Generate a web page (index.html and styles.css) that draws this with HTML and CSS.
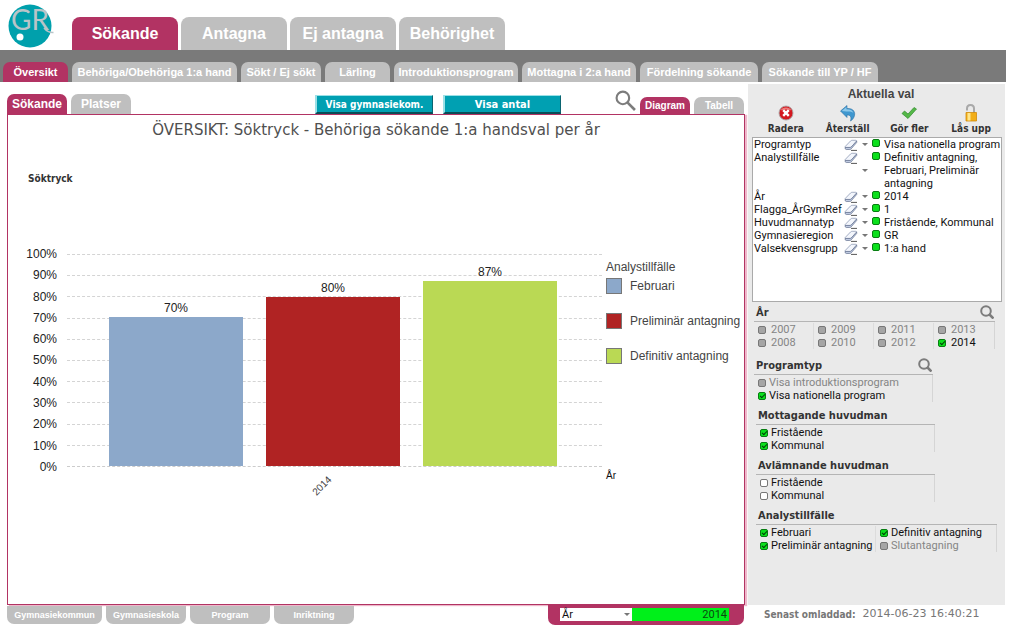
FILE: index.html
```html
<!DOCTYPE html>
<html lang="sv">
<head>
<meta charset="utf-8">
<title>Översikt: Söktryck</title>
<link rel="stylesheet" href="styles.css">
</head>
<body>
<svg class="sprite" aria-hidden="true">
  <symbol id="lens" viewBox="0 0 20 20"><circle cx="7.500" cy="7.500" r="6" fill="none" stroke="currentColor" stroke-width="2"/><path d="M12 12 19 19" stroke="currentColor" stroke-width="2.500"/></symbol>
  <symbol id="lens-bold" viewBox="0 0 14 14"><circle cx="6" cy="6" r="4.800" fill="none" stroke="currentColor" stroke-width="2"/><path d="M9 9 13.500 13.500" stroke="currentColor" stroke-width="2.600"/></symbol>
  <symbol id="eraser" viewBox="0 0 14 12"><path d="M1.200 7.500 6.500 2Q7.200 1.300 8.200 1.300h3.600q1.400 0 .5 1L7.500 7.800Q7 8.400 6 8.400H2Q.5 8.400 1.200 7.500Z" fill="#f3f6fc" stroke="#8f9ab5" stroke-width=".8"/><path d="M1 8.500q0 2 1.200 2h3.600q.8 0 1.300-.6L12.700 3.500V2L7.300 7.900q-.5.6-1.300.6Z" fill="#c0cbe2" stroke="#66728f" stroke-width=".7"/><path d="M7 11.400h6" stroke="#444" stroke-width=".9"/></symbol>
</svg>
<header class="top">
  <svg class="logo" viewBox="0 0 46 44" role="img" aria-label="GR">
    <circle cx="22" cy="22" r="21.500" fill="#00a0ac"/>
    <circle cx="12" cy="33" r="3.500" fill="#fff"/>
    <text class="logo-text" x="3" y="26">GR</text>
    <path d="M36 24q4 5 9.500 4.500" fill="none" stroke="#b9c4c8" stroke-width="1.500"/>
  </svg>
  <nav class="main-tabs">
    <button class="tab active">Sökande</button>
    <button class="tab">Antagna</button>
    <button class="tab">Ej antagna</button>
    <button class="tab">Behörighet</button>
  </nav>
</header>
<nav class="sub-tabs">
  <button class="tab s65 active">Översikt</button>
  <button class="tab s165">Behöriga/Obehöriga 1:a hand</button>
  <button class="tab s80">Sökt / Ej sökt</button>
  <button class="tab s65">Lärling</button>
  <button class="tab s124">Introduktionsprogram</button>
  <button class="tab s114">Mottagna i 2:a hand</button>
  <button class="tab s118">Fördelning sökande</button>
  <button class="tab s116">Sökande till YP / HF</button>
</nav>
<div class="workspace">
  <main class="content">
    <div class="toolbar">
      <div class="view-tabs">
        <button class="tab active">Sökande</button>
        <button class="tab">Platser</button>
      </div>
      <div class="actions">
        <button class="action small">Visa gymnasiekom.</button>
        <button class="action">Visa antal</button>
      </div>
      <div class="mode-tabs">
        <button class="plain" aria-label="Sök"><svg class="lens"><use href="#lens"/></svg></button>
        <button class="tab active">Diagram</button>
        <button class="tab">Tabell</button>
      </div>
    </div>
    <section class="chart">
      <h1 class="chart-title">ÖVERSIKT: Söktryck - Behöriga sökande 1:a handsval per år</h1>
      <p class="measure">Söktryck</p>
      <div class="chart-body">
        <div class="y-axis">
          <span>100%</span><span>90%</span><span>80%</span><span>70%</span><span>60%</span><span>50%</span><span>40%</span><span>30%</span><span>20%</span><span>10%</span><span>0%</span>
        </div>
        <div class="plot">
          <div class="grid-lines"><i></i><i></i><i></i><i></i><i></i><i></i><i></i><i></i><i></i><i></i></div>
          <div class="bars">
            <div class="column"><span>70%</span><div class="bar blue" style="height:70.3%"></div></div>
            <div class="column"><span>80%</span><div class="bar red" style="height:79.8%"></div></div>
            <div class="column"><span>87%</span><div class="bar green" style="height:87.3%"></div></div>
          </div>
        </div>
        <div class="legend">
          <p>Analystillfälle</p>
          <ul>
            <li><i class="blue"></i>Februari</li>
            <li><i class="red"></i>Preliminär antagning</li>
            <li><i class="green"></i>Definitiv antagning</li>
          </ul>
        </div>
        <div class="x-axis"><span>2014</span></div>
        <div class="x-title">År</div>
      </div>
    </section>
  </main>
  <aside class="side">
    <h2 class="side-title">Aktuella val</h2>
    <div class="tools">
      <button class="tool"><svg viewBox="0 0 18 18"><circle cx="9" cy="9" r="7" fill="#d3181f" stroke="#a8a8a8" stroke-width=".9"/><path d="M3.500 6.500a6 5 0 0 1 11 0q-5-2-11 0Z" fill="#ee7a7a"/><path d="m6.200 6.200 5.600 5.600m0-5.600-5.600 5.600" stroke="#fff" stroke-width="2.400"/></svg>Radera</button>
      <button class="tool"><svg viewBox="0 0 18 18"><path d="M1.500 7 8 1.500v3c6.500-.5 9 4 7 8.500-.8 2-2 3-3.500 4 1-3.500.5-6-3.500-6v2.500Z" fill="#3f97cf" stroke="#2a6fa3" stroke-width=".6"/><path d="M2.800 7 7.400 3v2.300c4 0 6 1 7 3.500-2-1.300-4-1.500-7-1.300Z" fill="#8cc8ea"/></svg>Återställ</button>
      <button class="tool"><svg viewBox="0 0 18 18"><path d="m2 9.500 2.500-2.500L8 10l6-6.500L16.500 5 8 14.500Z" fill="#55b848" stroke="#2f8a2c" stroke-width=".7"/></svg>Gör fler</button>
      <button class="tool"><svg viewBox="0 0 18 18"><path d="M5 6.500V4.500q0-3.500 3.500-3.500T12 4.500V9" fill="none" stroke="#a9a9a9" stroke-width="2"/><path d="M4 8.500h10.500v8.500H4Z" fill="#f2ae18" stroke="#d08a0a" stroke-width=".8"/><path d="M5.500 9h3v7.500h-3Z" fill="#ffe68c"/></svg>Lås upp</button>
    </div>
    <div class="selections">
      <table>
        <tr><th>Programtyp</th><td><svg class="eraser"><use href="#eraser"/></svg></td><td><i class="caret"></i></td><td><i class="dot"></i></td><td class="single">Visa nationella program</td></tr>
        <tr><th>Analystillfälle</th><td><svg class="eraser"><use href="#eraser"/></svg></td><td class="mid"><i class="caret"></i></td><td><i class="dot"></i></td><td>Definitiv antagning, Februari, Preliminär antagning</td></tr>
        <tr><th>År</th><td><svg class="eraser"><use href="#eraser"/></svg></td><td><i class="caret"></i></td><td><i class="dot"></i></td><td>2014</td></tr>
        <tr><th>Flagga_ÅrGymRef</th><td><svg class="eraser"><use href="#eraser"/></svg></td><td><i class="caret"></i></td><td><i class="dot"></i></td><td>1</td></tr>
        <tr><th>Huvudmannatyp</th><td><svg class="eraser"><use href="#eraser"/></svg></td><td><i class="caret"></i></td><td><i class="dot"></i></td><td class="single">Fristående, Kommunal</td></tr>
        <tr><th>Gymnasieregion</th><td><svg class="eraser"><use href="#eraser"/></svg></td><td><i class="caret"></i></td><td><i class="dot"></i></td><td>GR</td></tr>
        <tr><th>Valsekvensgrupp</th><td><svg class="eraser"><use href="#eraser"/></svg></td><td><i class="caret"></i></td><td><i class="dot"></i></td><td>1:a hand</td></tr>
      </table>
    </div>
    <section class="filter wide years">
      <h3>År <button class="plain" aria-label="Sök år"><svg class="lens-bold"><use href="#lens-bold"/></svg></button></h3>
      <div class="options four">
        <label><input type="checkbox" disabled>2007</label><label><input type="checkbox" disabled>2008</label>
        <label><input type="checkbox" disabled>2009</label><label><input type="checkbox" disabled>2010</label>
        <label><input type="checkbox" disabled>2011</label><label><input type="checkbox" disabled>2012</label>
        <label><input type="checkbox" disabled>2013</label><label><input type="checkbox" checked>2014</label>
      </div>
    </section>
    <section class="filter">
      <h3>Programtyp <button class="plain" aria-label="Sök programtyp"><svg class="lens-bold"><use href="#lens-bold"/></svg></button></h3>
      <div class="options">
        <label><input type="checkbox" disabled>Visa introduktionsprogram</label>
        <label><input type="checkbox" checked>Visa nationella program</label>
      </div>
    </section>
    <section class="filter inset">
      <h3>Mottagande huvudman</h3>
      <div class="options">
        <label><input type="checkbox" checked>Fristående</label>
        <label><input type="checkbox" checked>Kommunal</label>
      </div>
    </section>
    <section class="filter inset">
      <h3>Avlämnande huvudman</h3>
      <div class="options">
        <label><input type="checkbox">Fristående</label>
        <label><input type="checkbox">Kommunal</label>
      </div>
    </section>
    <section class="filter inset wide">
      <h3>Analystillfälle</h3>
      <div class="options two">
        <label><input type="checkbox" checked>Februari</label><label><input type="checkbox" checked>Preliminär antagning</label>
        <label><input type="checkbox" checked>Definitiv antagning</label><label><input type="checkbox" disabled>Slutantagning</label>
      </div>
    </section>
  </aside>
</div>
<footer class="bottom">
  <div class="bottom-left">
    <nav class="dimension-tabs">
      <button class="tab first">Gymnasiekommun</button>
      <button class="tab">Gymnasieskola</button>
      <button class="tab">Program</button>
      <button class="tab">Inriktning</button>
    </nav>
    <div class="year-picker">
      <button class="year-name">År<i class="caret"></i></button>
      <span class="year-value">2014</span>
    </div>
  </div>
  <p class="reloaded"><b>Senast omladdad:</b><time>2014-06-23 16:40:21</time></p>
</footer>
</body>
</html>
```

FILE: styles.css
```css
* { box-sizing: border-box; }
body, h1, h2, h3, p, ul { margin: 0; padding: 0; }
body {
  --wine: #b23363;
  --tab: #bfbfbf;
  background: #fff;
  color: #111;
  font: 11px/13px Roboto, sans-serif;
}
button { font: inherit; color: inherit; border: 0; padding: 0; cursor: pointer; }
i { font-style: normal; display: block; }
.sprite { display: none; }
.plain { background: none; color: #7c7c7c; display: block; }
.plain svg { display: block; }

.tab {
  background: var(--tab);
  color: #fff;
  font-family: "Liberation Sans", Arial, sans-serif;
  font-weight: bold;
  font-size: 12px;
  white-space: nowrap;
  overflow: hidden;
  border-radius: 7px 7px 0 0;
}
.tab.active { background: var(--wine); }

.top { display: flex; align-items: flex-end; height: 50px; padding-left: 8px; }
.logo { width: 46px; height: 44px; margin-bottom: 2px; flex: none; overflow: visible; }
.logo-text { font: 28px Lato, sans-serif; fill: #b9c4c8; }
.main-tabs { display: flex; gap: 3px; margin-left: 18px; }
.main-tabs .tab { width: 106px; height: 33px; font-size: 16px; border-radius: 8px 8px 0 0; }

.sub-tabs {
  display: flex;
  align-items: flex-end;
  gap: 4px;
  height: 32px;
  padding-left: 3px;
  margin-right: 6px;
  background: #7a7a7a;
}
.sub-tabs .tab { height: 20px; font-size: 11px; }
.s65 { width: 65px; }
.s80 { width: 80px; }
.s114 { width: 114px; }
.s116 { width: 116px; }
.s118 { width: 118px; }
.s124 { width: 124px; }
.s165 { width: 165px; }

.workspace { display: flex; margin: 2px 7px 0; }
.content { flex: 1; display: flex; flex-direction: column; min-width: 0; }
.toolbar { display: flex; justify-content: space-between; align-items: flex-end; height: 30px; padding-right: 1px; }
.view-tabs, .mode-tabs { display: flex; gap: 4px; align-items: flex-end; }
.view-tabs .tab { width: 60px; height: 20px; }
.mode-tabs .tab { width: 50px; height: 17px; font-size: 10px; }
.mode-tabs .plain { padding-bottom: 3px; }
.lens { width: 21px; height: 21px; }
.actions { display: flex; gap: 10px; margin-left: 130px; flex: 1; padding-left: 54px; }
.action {
  width: 118px;
  height: 19px;
  background: #00a0b2;
  color: #fff;
  font-family: "DejaVu Sans Condensed", "DejaVu Sans", sans-serif;
  font-weight: bold;
  font-size: 11px;
  border: 1px solid;
  border-width: 1px 1px 2px 2px;
  border-color: #9be0e6 #0a6470 #0a4d57 #9be0e6;
}
.action.small { font-size: 10px; }

.chart {
  flex: 1;
  border: 1px solid var(--wine);
  box-shadow: 2px 1px 1px #edb8ca;
  color: #444;
  overflow: hidden;
}
.chart-title { margin-top: 5px; font: 15px/20px "DejaVu Sans", sans-serif; text-align: center; color: #505050; }
.measure { margin: 32px 0 0 20px; font: bold 10px/13px "DejaVu Sans Condensed", "DejaVu Sans", sans-serif; color: #333; }
.chart-body {
  display: grid;
  grid-template-columns: 49px 1fr 138px;
  grid-template-rows: 213px 39px;
  column-gap: 10px;
  row-gap: 2px;
  margin-top: 69px;
  font: 12px/14px "Liberation Sans", Arial, sans-serif;
}
.y-axis { display: flex; flex-direction: column; justify-content: space-between; text-align: right; margin: -7px 0; color: #222; }
.plot { display: grid; margin-right: -6px; border-bottom: 1px dashed #ccc; }
.grid-lines, .bars { grid-area: 1 / 1; min-height: 0; }
.grid-lines { display: flex; flex-direction: column; }
.grid-lines i { flex: 1; border-top: 1px dashed #d4d4d4; }
.bars { display: grid; grid-template-columns: repeat(3, 1fr); gap: 23px; padding: 0 45px 0 42px; }
.column { display: flex; flex-direction: column; justify-content: flex-end; text-align: center; color: #222; gap: 2px; }
.bar { flex: none; }
.blue { background: #8ca8ca; }
.red { background: #b02323; }
.green { background: #bad954; }
.legend { padding-top: 6px; white-space: nowrap; }
.legend ul { list-style: none; display: grid; gap: 19px; margin-top: 4px; }
.legend li { display: flex; align-items: center; gap: 8px; height: 16px; }
.legend li i { width: 16px; height: 16px; border: 1px solid #777; flex: none; }
.x-axis { grid-column: 2; text-align: center; padding: 10px 18px 0 0; font-size: 10px; }
.x-axis span { display: inline-block; transform: rotate(-45deg); }
.x-title { font-size: 10px; color: #111; }

.side { width: 257px; margin-left: 3px; min-height: 521px; padding: 0 3px 0 4px; background: #eaeaea; }
.side-title { font: bold 12px/20px "Liberation Sans", Arial, sans-serif; color: #444; text-align: center; padding-left: 8px; }
.tools { display: grid; grid-template-columns: repeat(4, 1fr); padding-left: 3px; }
.tool {
  display: flex;
  flex-direction: column;
  align-items: center;
  background: none;
  color: #333;
  font: bold 10px/14px "DejaVu Sans Condensed", "DejaVu Sans", sans-serif;
}
.tool svg { width: 18px; height: 18px; }
.selections { height: 165px; background: #fff; border: 1px solid #aaa; margin-top: 1px; }
.selections table { border-collapse: collapse; table-layout: fixed; width: 100%; }
.selections th, .selections td { padding: 0 0 0 1px; font-weight: normal; text-align: left; vertical-align: top; height: 13px; }
.selections th { width: 90px; }
.selections td:nth-child(2) { width: 18px; }
.selections td:nth-child(3) { width: 10px; }
.selections td:nth-child(4) { width: 12px; }
.selections td.mid { vertical-align: middle; }
.selections .single { white-space: nowrap; }
.eraser { display: block; width: 14px; height: 12px; margin-top: 1px; }
.caret { width: 0; height: 0; border: 3px solid transparent; border-top-color: #777; border-bottom: 0; margin-top: 5px; }
.mid .caret { margin-top: 0; }
.dot { width: 8px; height: 8px; margin-top: 1px; background: #0be01c; border: 1px solid #087d12; border-radius: 2px; }

.filter { width: 179px; margin: 0 0 4px 2px; }
.filter.inset { margin-left: 4px; }
.filter.wide { width: 241px; }
.filter.years { margin: 1px 0 7px 2px; }
.filter h3 {
  display: flex;
  justify-content: space-between;
  align-items: center;
  height: 19px;
  padding: 0 1px 0 2px;
  font: bold 11px/13px "DejaVu Sans Condensed", "DejaVu Sans", sans-serif;
  color: #333;
  border-bottom: 1px solid #b5b5b5;
}
.lens-bold { width: 14px; height: 14px; }
.options { display: grid; grid-template-rows: 13px 13px; grid-auto-flow: column; grid-auto-columns: 1fr; padding-top: 1px; border-right: 1px solid #d5d5d5; }
.options label { display: flex; align-items: center; gap: 3px; padding-left: 4px; white-space: nowrap; border-right: 1px solid #dcdcdc; }
.options label:has(:disabled) { color: #858585; }
.options.four label { gap: 5px; }
.options label:nth-last-child(-n+2) { border-right: 0; }
.options input {
  appearance: none;
  flex: none;
  width: 8px;
  height: 8px;
  margin: 0;
  background: #fff;
  border: 1px solid #777;
  border-radius: 2px;
}
.options input:disabled { background: #a5a5a5; }
.options input:checked { background: #0be01c; border-color: #087d12; display: grid; place-items: center; }
.options input:checked::after { content: ""; width: 4px; height: 2px; border: solid #043d08; border-width: 0 0 1px 1px; transform: rotate(-45deg); }

.bottom { display: flex; align-items: flex-start; margin: 0 7px; }
.bottom-left { flex: 1; display: flex; justify-content: space-between; align-items: flex-start; }
.dimension-tabs { display: flex; gap: 4px; padding-top: 1px; }
.dimension-tabs .tab { width: 80px; height: 18px; font-size: 9px; border-radius: 0 0 7px 7px; }
.dimension-tabs .first { width: 95px; }
.year-picker { display: flex; width: 196px; height: 20px; padding: 3px 15px 4px 12px; background: var(--wine); border-radius: 0 0 7px 7px; }
.year-name { display: flex; justify-content: space-between; width: 72px; background: #fff; padding: 0 2px; }
.year-value { flex: 1; background: #00f01a; text-align: right; padding-right: 2px; color: #0a4a10; }
.reloaded { display: flex; gap: 7px; width: 261px; padding: 2px 0 0 20px; color: #777; line-height: 14px; white-space: nowrap; }
.reloaded b { font: bold 10px/16px "DejaVu Sans Condensed", "DejaVu Sans", sans-serif; }
.reloaded time { font-family: "DejaVu Sans", sans-serif; }
```
